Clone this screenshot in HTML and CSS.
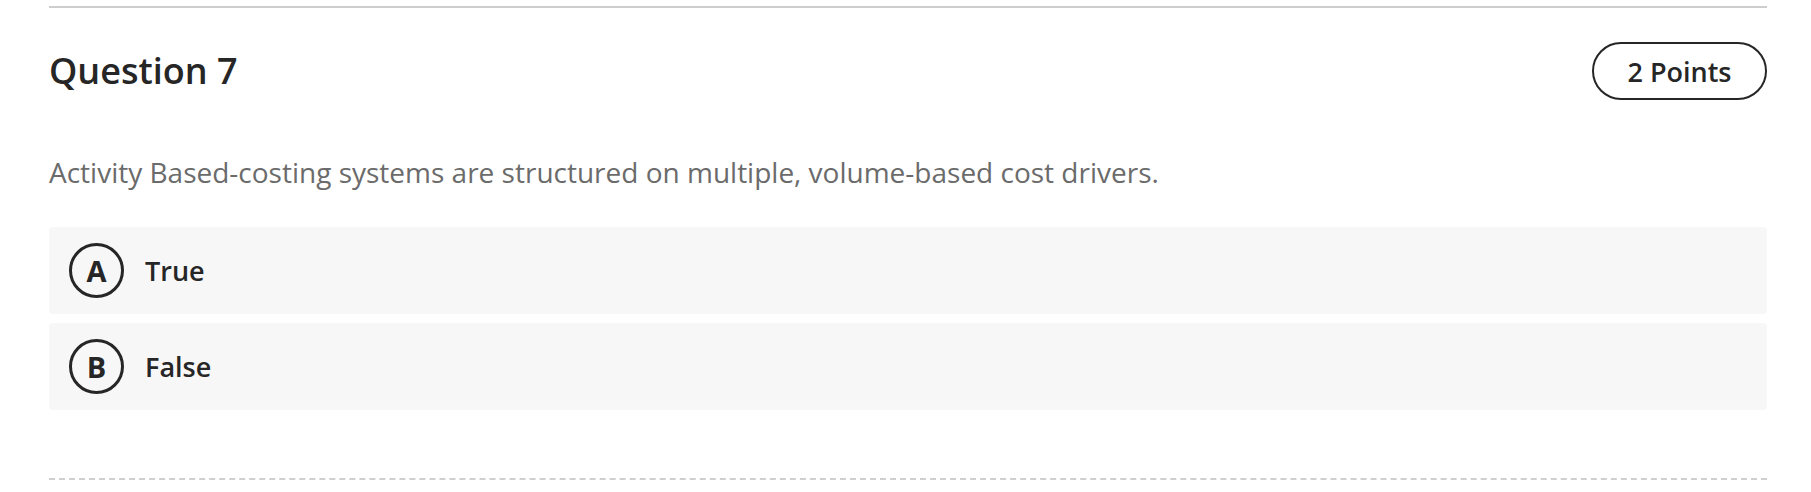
FILE: index.html
```html
<!DOCTYPE html>
<html>
<head>
<meta charset="utf-8">
<link rel="stylesheet" href="styles.css">
</head>
<body>
<div class="question">
  <div class="rule"></div>
  <div class="head">
    <h2 class="title">Question 7</h2>
    <span class="points">2 Points</span>
  </div>
  <p class="prompt">Activity Based-costing systems are structured on multiple, volume-based cost drivers.</p>
  <div class="options">
    <div class="option"><span class="letter">A</span><span class="label">True</span></div>
    <div class="option"><span class="letter">B</span><span class="label">False</span></div>
  </div>
  <div class="dash"></div>
</div>
</body>
</html>
```

FILE: styles.css
```css
html, body {
  margin: 0;
  background: #fff;
  font-family: "Open Sans", "Liberation Sans", sans-serif;
  color: #262626;
}
.question {
  padding: 0 44px 0 49px;
}
.rule {
  margin-top: 6px;
  border-top: 2px solid #cdcdcd;
}
.head {
  display: flex;
  justify-content: space-between;
  align-items: center;
  margin-top: 34px;
}
.title {
  margin: 0;
  font-size: 36px;
  font-weight: 600;
  line-height: 50px;
  color: #262626;
}
.points {
  box-sizing: border-box;
  height: 58px;
  width: 175px;
  display: flex;
  align-items: center;
  justify-content: center;
  border: 2px solid #262626;
  border-radius: 29px;
  font-size: 27px;
  font-weight: 600;
}
.prompt {
  margin: 53px 0 0;
  font-size: 28px;
  line-height: 38px;
  color: #6b6b6b;
}
.options {
  display: flex;
  flex-direction: column;
  gap: 9px;
  margin-top: 36px;
}
.option {
  display: flex;
  align-items: center;
  gap: 21px;
  height: 87px;
  padding-left: 20px;
  background: #f7f7f7;
  border-radius: 4px;
}
.letter {
  box-sizing: border-box;
  width: 55px;
  height: 55px;
  border: 3px solid #262626;
  border-radius: 50%;
  display: flex;
  align-items: center;
  justify-content: center;
  font-size: 29px;
  font-weight: 700;
}
.label {
  font-size: 27px;
  font-weight: 600;
}
.dash {
  margin-top: 68px;
  border-top: 2px dashed #cfcfcf;
}
```
